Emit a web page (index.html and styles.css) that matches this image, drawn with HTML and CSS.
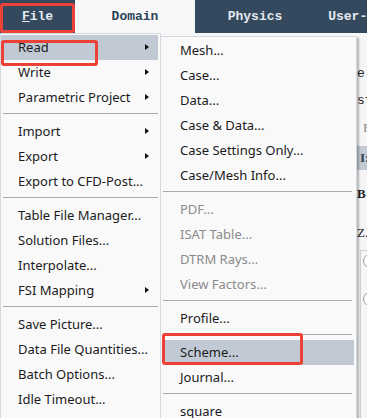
FILE: index.html
```html
<!DOCTYPE html>
<html lang="en">
<head>
<meta charset="UTF-8">
<title>File menu</title>
<link rel="stylesheet" href="styles.css">
</head>
<body>

<div class="tabs">
	<div class="tab tab-file"><u>F</u>ile</div>
	<div class="tab tab-on">Domain</div>
	<div class="tab">Physics</div>
	<div class="tab">User-Defined</div>
</div>

<div class="content">
	<p class="row mono">e.</p>
	<p class="row mono">sf</p>
	<p class="row serif dim">F</p>
	<p class="row band serif bold">I:</p>
	<p class="row row-b serif bold">B</p>
	<p class="row row-z serif">Z.</p>
	<div class="group">
		<div class="radio"></div>
		<div class="radio"></div>
	</div>
</div>

<ul class="menu main-menu">
	<li class="sub on">Read</li>
	<li class="sub">Write</li>
	<li class="sub">Parametric Project</li>
	<li class="sep"></li>
	<li class="sub">Import</li>
	<li class="sub">Export</li>
	<li>Export to CFD-Post...</li>
	<li class="sep"></li>
	<li>Table File Manager...</li>
	<li>Solution Files...</li>
	<li>Interpolate...</li>
	<li class="sub">FSI Mapping</li>
	<li class="sep"></li>
	<li>Save Picture...</li>
	<li>Data File Quantities...</li>
	<li>Batch Options...</li>
	<li>Idle Timeout...</li>
</ul>

<ul class="menu sub-menu">
	<li>Mesh...</li>
	<li>Case...</li>
	<li>Data...</li>
	<li>Case &amp; Data...</li>
	<li>Case Settings Only...</li>
	<li>Case/Mesh Info...</li>
	<li class="sep"></li>
	<li class="off">PDF...</li>
	<li class="off">ISAT Table...</li>
	<li class="off">DTRM Rays...</li>
	<li class="off">View Factors...</li>
	<li class="sep"></li>
	<li>Profile...</li>
	<li class="sep"></li>
	<li class="on">Scheme...</li>
	<li>Journal...</li>
	<li class="sep"></li>
	<li>square</li>
</ul>

<div class="mark mark-file"></div>
<div class="mark mark-read"></div>
<div class="mark mark-scheme"></div>

</body>
</html>
```

FILE: styles.css
```css
*{ margin:0; padding:0; box-sizing:border-box; }
body{
	width:367px;
	height:418px;
	overflow:hidden;
	background:#f6f6f6;
	position:relative;
}

/* top ribbon tabs */
.tabs{
	display:flex;
	height:33px;
	background:#34495e;
	white-space:nowrap;
}
.tab{
	flex:0 0 120px;
	font:bold 13px "Liberation Mono", monospace;
	line-height:34px;
	text-align:center;
	color:#e3e9ef;
}
.tab-file{ flex-basis:75px; }
.tab-on{
	background:#f8f8f8;
	color:#2e4257;
}

/* page behind the menus */
.content{
	padding:27px 0 0 357px;
	font-size:13px;
	color:#222;
}
.row{
	height:27px;
	line-height:27px;
	white-space:nowrap;
}
.mono{ font-family:"Liberation Mono", monospace; }
.serif{ font-family:"Liberation Serif", serif; }
.bold{ font-weight:bold; }
.dim{ color:#888; padding-left:6px; }
.band{
	margin-top:5px;
	height:24px;
	line-height:24px;
	background:#c3cad3;
	padding-left:3px;
	color:#2e4257;
}
.row-b{ margin-top:12px; height:24px; line-height:24px; }
.row-z{ margin-top:15px; height:24px; line-height:24px; }
.group{
	margin:5px 0 0 3px;
	height:180px;
	border:1px solid #d2d2d2;
	border-right:0;
	padding:3px 0 0 2px;
}
.radio{
	width:14px;
	height:14px;
	border:1px solid #9a9a9a;
	border-radius:50%;
	margin-bottom:24px;
	background:#fff;
}

/* menus */
.menu{
	position:absolute;
	list-style:none;
	background:#f9f9fa;
	border:1px solid #d3d9e1;
	padding:1px 0;
	font:13px "Noto Sans", sans-serif;
	color:#1b1b1b;
}
.menu li{
	position:relative;
	height:25px;
	line-height:25px;
	padding-left:17px;
	white-space:nowrap;
}
.menu li.on{ background:#c1cad4; }
.menu li.off{ color:#8b8b8b; }
.menu li.sep{
	height:0;
	padding:0;
	margin:3px 2px 5px 2px;
	border-top:1px solid #a9a9a9;
}
.menu li.sub::after{
	content:"";
	position:absolute;
	right:9px;
	top:9px;
	border-left:4px solid #111;
	border-top:3px solid transparent;
	border-bottom:3px solid transparent;
}

.main-menu{
	left:0;
	top:33px;
	width:161px;
	height:390px;
}
.main-menu li{ margin-right:2px; }

.sub-menu{
	left:160px;
	top:36px;
	width:197px;
	height:390px;
	box-shadow:2px 2px 2px rgba(0,0,0,0.28);
}
.sub-menu li{ margin:0 2px; }
.sub-menu li.sep{ margin:3px 4px 5px 2px; }

/* red annotation frames */
.mark{
	position:absolute;
	border:3px solid #eb4136;
	border-radius:3px;
}
.mark-file{ left:0; top:3px; width:75px; height:30px; }
.mark-read{ left:1px; top:40px; width:97px; height:26px; }
.mark-scheme{ left:162px; top:333px; width:141px; height:32px; }
```
